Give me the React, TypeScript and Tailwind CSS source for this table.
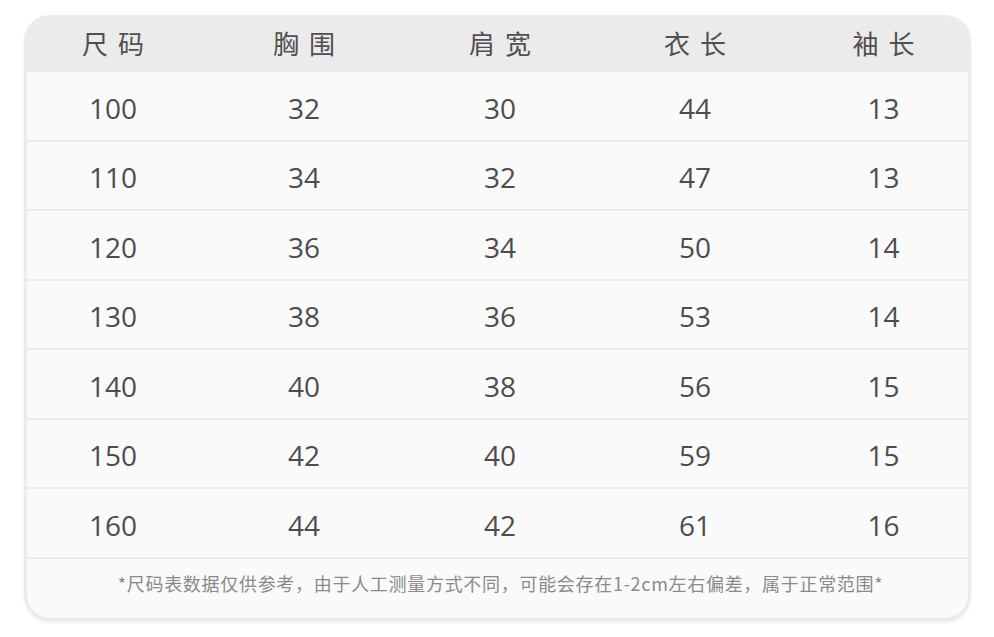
const headers = ["尺码", "胸围", "肩宽", "衣长", "袖长"];

const rows: number[][] = [
  [100, 32, 30, 44, 13],
  [110, 34, 32, 47, 13],
  [120, 36, 34, 50, 14],
  [130, 38, 36, 53, 14],
  [140, 40, 38, 56, 15],
  [150, 42, 40, 59, 15],
  [160, 44, 42, 61, 16],
];

const cols = "grid grid-cols-[172px_210px_182px_208px_1fr]";

export default function App() {
  return (
    <div
      className="w-[994px] h-[637px] bg-white pt-[15px] pl-[24px]"
      style={{ fontFamily: '"Open Sans", "Noto Sans CJK SC", sans-serif' }}
    >
      <div className="w-[947px] h-[606px] rounded-[26px] border-[3px] border-[#ebebeb] bg-[#fafafa] overflow-hidden shadow-[0_2px_3px_rgba(0,0,0,0.06)] flex flex-col">
        {/* Header */}
        <div className={`${cols} h-[54px] bg-[#ebebeb] items-center pb-[5px]`}>
          {headers.map((h) => (
            <div
              key={h}
              className="text-center text-[26px] leading-none tracking-[10px] pl-[10px] text-[#505050]"
              style={{ fontFamily: '"Noto Sans CJK SC", sans-serif' }}
            >
              {h}
            </div>
          ))}
        </div>

        {/* Rows */}
        {rows.map((r) => (
          <div
            key={r[0]}
            className={`${cols} h-[69.5px] border-b-2 border-[#ebebeb] items-center`}
          >
            {r.map((v, i) => (
              <div
                key={i}
                className="text-center text-[28px] leading-none pt-[4px] text-[#4d4d4d] font-[450]"
              >
                {v}
              </div>
            ))}
          </div>
        ))}

        {/* Footer */}
        <div className="flex-1 flex justify-center pt-[11px] pl-[6px]">
          <p
            className="text-[18px] leading-[26px] tracking-[0.7px] text-[#8a8a8a]"
            style={{ fontFamily: '"Noto Sans CJK SC", sans-serif' }}
          >
            *尺码表数据仅供参考，由于人工测量方式不同，可能会存在1-2cm左右偏差，属于正常范围*
          </p>
        </div>
      </div>
    </div>
  );
}
